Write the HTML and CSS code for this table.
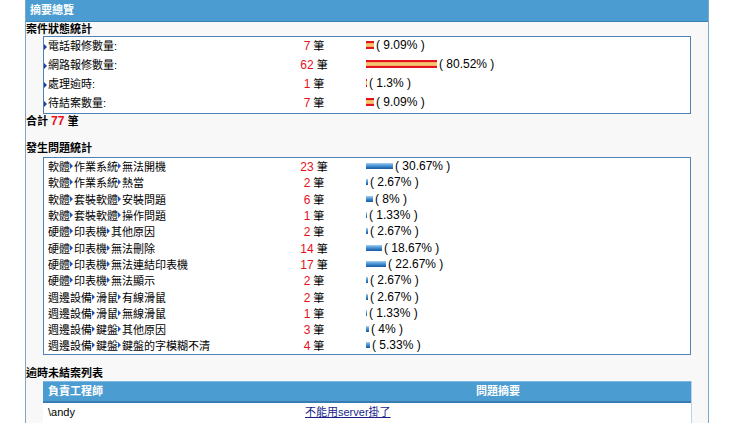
FILE: index.html
```html
<!DOCTYPE html>
<html lang="zh-Hant">
<head>
<meta charset="utf-8">
<title>摘要總覽</title>
<link rel="stylesheet" href="styles.css">
</head>
<body>
<div class="panel">
  <div class="panel-head">摘要總覽</div>
  <div class="panel-body">
    <div class="sec-title">案件狀態統計</div>
    <div class="box box-status">
      <div class="row"><div class="label"><span class="arrow"></span>電話報修數量:</div><div class="count"><span class="num">7</span> 筆</div><div class="pct"><span class="bar red" style="width:8px"></span>( 9.09% )</div></div>
      <div class="row"><div class="label"><span class="arrow"></span>網路報修數量:</div><div class="count"><span class="num">62</span> 筆</div><div class="pct"><span class="bar red" style="width:71px"></span>( 80.52% )</div></div>
      <div class="row"><div class="label"><span class="arrow"></span>處理逾時:</div><div class="count"><span class="num">1</span> 筆</div><div class="pct"><span class="bar red" style="width:1px"></span>( 1.3% )</div></div>
      <div class="row"><div class="label"><span class="arrow"></span>待結案數量:</div><div class="count"><span class="num">7</span> 筆</div><div class="pct"><span class="bar red" style="width:8px"></span>( 9.09% )</div></div>
    </div>
    <div class="total">合計 <span class="num">77</span> 筆</div>

    <div class="sec-title sec-gap">發生問題統計</div>
    <div class="box box-issue">
      <div class="row"><div class="label">軟體<span class="sep"></span>作業系統<span class="sep"></span>無法開機</div><div class="count"><span class="num">23</span> 筆</div><div class="pct"><span class="bar blue" style="width:27px"></span>( 30.67% )</div></div>
      <div class="row"><div class="label">軟體<span class="sep"></span>作業系統<span class="sep"></span>熱當</div><div class="count"><span class="num">2</span> 筆</div><div class="pct"><span class="bar blue" style="width:2px"></span>( 2.67% )</div></div>
      <div class="row"><div class="label">軟體<span class="sep"></span>套裝軟體<span class="sep"></span>安裝問題</div><div class="count"><span class="num">6</span> 筆</div><div class="pct"><span class="bar blue" style="width:7px"></span>( 8% )</div></div>
      <div class="row"><div class="label">軟體<span class="sep"></span>套裝軟體<span class="sep"></span>操作問題</div><div class="count"><span class="num">1</span> 筆</div><div class="pct"><span class="bar blue" style="width:1px"></span>( 1.33% )</div></div>
      <div class="row"><div class="label">硬體<span class="sep"></span>印表機<span class="sep"></span>其他原因</div><div class="count"><span class="num">2</span> 筆</div><div class="pct"><span class="bar blue" style="width:2px"></span>( 2.67% )</div></div>
      <div class="row"><div class="label">硬體<span class="sep"></span>印表機<span class="sep"></span>無法刪除</div><div class="count"><span class="num">14</span> 筆</div><div class="pct"><span class="bar blue" style="width:16px"></span>( 18.67% )</div></div>
      <div class="row"><div class="label">硬體<span class="sep"></span>印表機<span class="sep"></span>無法連結印表機</div><div class="count"><span class="num">17</span> 筆</div><div class="pct"><span class="bar blue" style="width:20px"></span>( 22.67% )</div></div>
      <div class="row"><div class="label">硬體<span class="sep"></span>印表機<span class="sep"></span>無法顯示</div><div class="count"><span class="num">2</span> 筆</div><div class="pct"><span class="bar blue" style="width:2px"></span>( 2.67% )</div></div>
      <div class="row"><div class="label">週邊設備<span class="sep"></span>滑鼠<span class="sep"></span>有線滑鼠</div><div class="count"><span class="num">2</span> 筆</div><div class="pct"><span class="bar blue" style="width:2px"></span>( 2.67% )</div></div>
      <div class="row"><div class="label">週邊設備<span class="sep"></span>滑鼠<span class="sep"></span>無線滑鼠</div><div class="count"><span class="num">1</span> 筆</div><div class="pct"><span class="bar blue" style="width:1px"></span>( 1.33% )</div></div>
      <div class="row"><div class="label">週邊設備<span class="sep"></span>鍵盤<span class="sep"></span>其他原因</div><div class="count"><span class="num">3</span> 筆</div><div class="pct"><span class="bar blue" style="width:3px"></span>( 4% )</div></div>
      <div class="row"><div class="label">週邊設備<span class="sep"></span>鍵盤<span class="sep"></span>鍵盤的字模糊不清</div><div class="count"><span class="num">4</span> 筆</div><div class="pct"><span class="bar blue" style="width:4px"></span>( 5.33% )</div></div>
    </div>

    <div class="sec-title sec-gap2">逾時未結案列表</div>
    <div class="overdue">
      <div class="ov-head">
        <div class="ov-c1">負責工程師</div>
        <div class="ov-c2">問題摘要</div>
      </div>
      <div class="ov-row">
        <div class="ov-c1">\andy</div>
        <div class="ov-c2 left"><a href="#" class="link">不能用server掛了</a></div>
      </div>
      <div class="ov-row">
        <div class="ov-c1">&nbsp;</div>
        <div class="ov-c2 left">&nbsp;</div>
      </div>
    </div>
  </div>
</div>
</body>
</html>
```

FILE: styles.css
```css
html, body {
  margin: 0;
  padding: 0;
  background: #ffffff;
}
body {
  font-family: "Liberation Sans", "Noto Sans CJK TC", sans-serif;
  font-size: 11px;
  color: #000;
  overflow: hidden;
}
.panel {
  margin-left: 25px;
  width: 682px;
  border-left: 1px solid #7ea6c9;
  border-right: 1px solid #7ea6c9;
  background: #f8f8f8;
  min-height: 440px;
}
.panel-head {
  height: 21px;
  line-height: 21px;
  background: #4b9cd1;
  border-bottom: 1px solid #3c7fb3;
  color: #fff;
  font-weight: bold;
  padding-left: 4px;
}
.panel-body {
  padding-top: 1px;
}
.sec-title {
  font-weight: bold;
  height: 13px;
  line-height: 13px;
}
.sec-gap {
  margin-top: 14px;
}
.sec-gap2 {
  margin-top: 12px;
}
.box {
  margin-left: 17px;
  width: 646px;
  border: 1px solid #4f83b8;
  background: #fff;
}
.box-issue {
  margin-top: 2px;
}
.row {
  display: grid;
  grid-template-columns: 230px 80px 1fr;
  align-items: center;
  box-sizing: border-box;
}
.box-status .row {
  height: 19px;
  padding-bottom: 3px;
}
.box-issue .row {
  height: 16.3px;
}
.label {
  display: flex;
  align-items: center;
  white-space: nowrap;
}
.box-issue .label {
  padding-left: 4px;
}
.arrow {
  display: inline-block;
  width: 0;
  height: 0;
  border-left: 3px solid #1f3f9f;
  border-top: 3px solid transparent;
  border-bottom: 3px solid transparent;
  margin-right: 1px;
  margin-top: 3px;
}
.sep {
  display: inline-block;
  width: 0;
  height: 0;
  border-left: 3px solid #2050b8;
  border-top: 3px solid transparent;
  border-bottom: 3px solid transparent;
  margin: 0 1px 0 0;
}
.count {
  text-align: center;
  white-space: nowrap;
}
.num {
  color: #e8101a;
  font-size: 12px;
}
.pct {
  display: flex;
  align-items: center;
  padding-left: 12px;
  white-space: nowrap;
  font-size: 12px;
}
.bar {
  display: inline-block;
  margin-right: 2px;
}
.bar.red {
  height: 8px;
  background: linear-gradient(to bottom, #e4141c 0, #e4141c 25%, #f3a15a 25%, #f8d27a 50%, #f3a15a 75%, #e4141c 75%, #e4141c 100%);
}
.bar.blue {
  height: 6px;
  background: linear-gradient(to bottom, #a9d1f0 0, #5aa2dc 35%, #2e77bf 70%, #1d5a9c 100%);
}
.total {
  font-weight: bold;
  height: 14px;
  line-height: 14px;
}
.overdue {
  margin-left: 17px;
  width: 648px;
  margin-top: 1px;
  border-right: 1px solid #b9d4ea;
}
.ov-head {
  display: grid;
  grid-template-columns: 262px 1fr;
  height: 19px;
  line-height: 19px;
  background: #4b9cd1;
  border-top: 1px solid #7db7e0;
  border-bottom: 2px solid #3a7cb1;
  color: #fff;
  font-weight: bold;
}
.ov-row {
  display: grid;
  grid-template-columns: 262px 1fr;
  height: 19px;
  line-height: 19px;
  background: #fff;
}
.ov-c1 {
  padding-left: 5px;
}
.ov-c2 {
  text-align: center;
}
.ov-c2.left {
  text-align: left;
}
.link {
  color: #1a1f8c;
  text-decoration: underline;
}
```
